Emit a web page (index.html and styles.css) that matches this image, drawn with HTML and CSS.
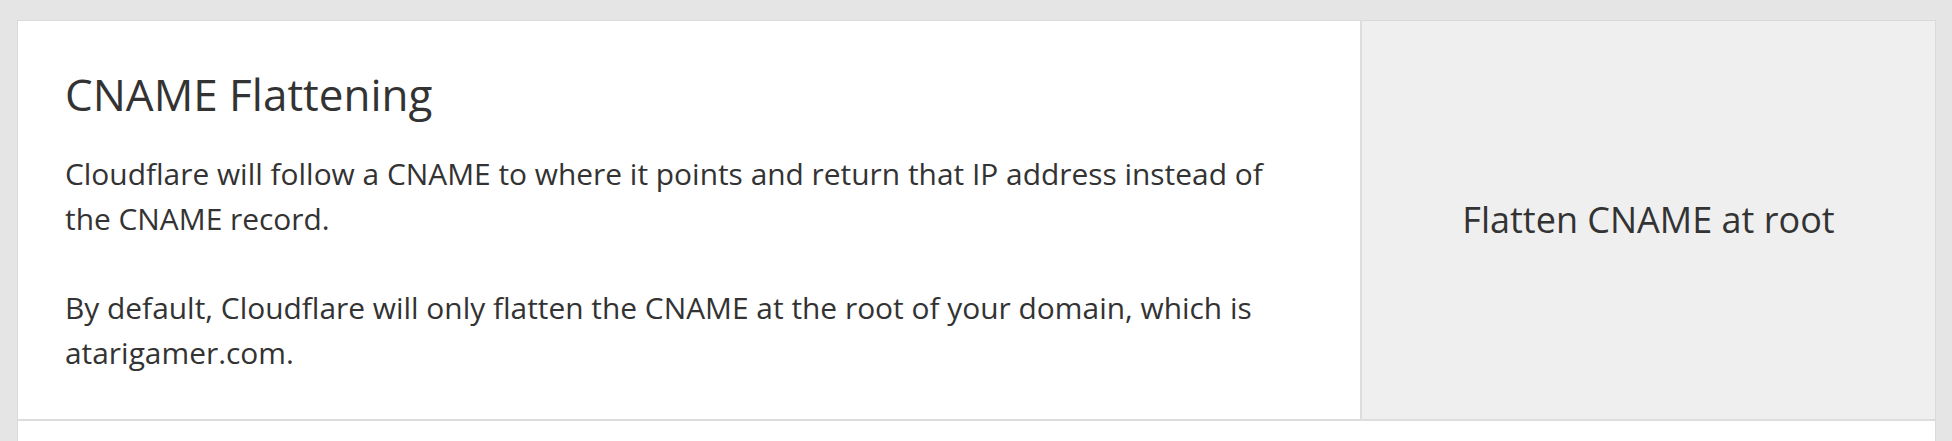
FILE: index.html
```html
<!DOCTYPE html>
<html>
<head>
<meta charset="utf-8">
<link rel="stylesheet" href="styles.css">
</head>
<body>
<div class="card">
  <div class="row">
    <div class="info">
      <h3 class="title">CNAME Flattening</h3>
      <p class="desc">Cloudflare will follow a CNAME to where it points and return that IP address instead of the CNAME record.</p>
      <p class="desc">By default, Cloudflare will only flatten the CNAME at the root of your domain, which is atarigamer.com.</p>
    </div>
    <div class="control">
      <span class="value">Flatten CNAME at root</span>
    </div>
  </div>
  <div class="row-next"></div>
</div>
</body>
</html>
```
FILE: styles.css
```css
html, body {
  margin: 0;
  padding: 0;
  background: #e5e5e5;
}
body {
  padding: 20px 16px 0 17px;
  font-family: "Open Sans", "Noto Sans", sans-serif;
  color: #333333;
}
.card {
  background: #ffffff;
  border: 1px solid #dadada;
  border-bottom: none;
}
.row {
  display: flex;
  border-bottom: 2px solid #dddddd;
}
.info {
  flex: 0 0 1344px;
  padding: 47px 60px 43px 47px;
  box-sizing: border-box;
  border-right: 2px solid #dddddd;
}
.title {
  margin: 0 0 31px 0;
  font-weight: 400;
  font-size: 44px;
  line-height: 52.8px;
}
.desc {
  margin: 0 0 44.8px 0;
  font-size: 29.9px;
  line-height: 44.8px;
}
.desc:last-child {
  margin-bottom: 0;
}
.control {
  flex: 1;
  background: #efefef;
  display: flex;
  align-items: center;
  justify-content: center;
}
.value {
  font-size: 36px;
}
.row-next {
  height: 40px;
}
```
